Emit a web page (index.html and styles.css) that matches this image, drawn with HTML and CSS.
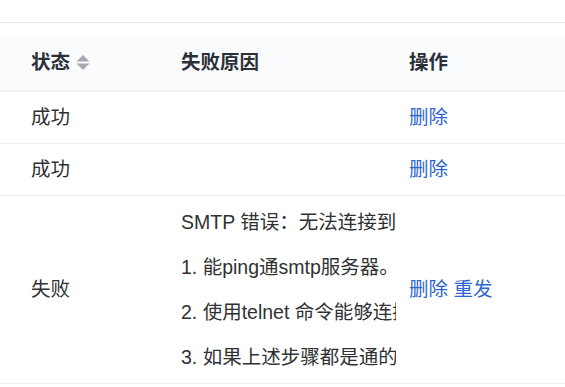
FILE: index.html
```html
<!DOCTYPE html>
<html lang="zh-CN">
<head>
<meta charset="utf-8">
<title>邮件发送记录</title>
<link rel="stylesheet" href="styles.css">
</head>
<body>
<div class="page">
  <div class="table">
    <div class="row head">
      <div class="cell c1"><span>状态</span>
        <svg class="sort" width="14" height="15" viewBox="0 0 14 15" aria-hidden="true">
          <polygon points="7,0 13.5,6.5 0.5,6.5" fill="#a7aab2"/>
          <polygon points="0.5,8.5 13.5,8.5 7,15" fill="#a7aab2"/>
        </svg>
      </div>
      <div class="cell c2">失败原因</div>
      <div class="cell c3">操作</div>
    </div>
    <div class="row">
      <div class="cell c1">成功</div>
      <div class="cell c2"></div>
      <div class="cell c3"><span><a class="link">删除</a></span></div>
    </div>
    <div class="row">
      <div class="cell c1">成功</div>
      <div class="cell c2"></div>
      <div class="cell c3"><span><a class="link">删除</a></span></div>
    </div>
    <div class="row">
      <div class="cell c1">失败</div>
      <div class="cell c2">
        <div class="reason">
          <p>SMTP 错误：无法连接到服务器</p>
          <p>1. 能ping通smtp服务器。</p>
          <p>2. 使用telnet 命令能够连接到服务器</p>
          <p>3. 如果上述步骤都是通的，请检查配置</p>
        </div>
      </div>
      <div class="cell c3"><span><a class="link">删除</a> <a class="link">重发</a></span></div>
    </div>
  </div>
</div>
</body>
</html>
```
FILE: styles.css
```css
* { box-sizing: border-box; }
html, body { margin: 0; padding: 0; background: #fff; }
body {
  font-family: "Liberation Sans", "Noto Sans CJK SC", sans-serif;
  font-size: 19.5px;
  color: #303133;
  overflow: hidden;
}
.page {
  padding-top: 22px;
}
.table {
  border-top: 1px solid #ebebeb;
  padding-top: 12px;
  width: 565px;
}
.row {
  display: grid;
  grid-template-columns: 169px 228px 1fr;
  border-bottom: 1px solid #eeeeee;
  align-items: center;
}
.row.head {
  background: #fafbfd;
  height: 57px;
  border-bottom: 2px solid #f0f1f3;
  font-weight: bold;
  color: #2b2f38;
}
.cell {
  padding: 12px 0 12px 12px;
  line-height: 27px;
  white-space: nowrap;
  display: flex;
  align-items: center;
}
.head .cell { padding-top: 0; padding-bottom: 0; }
.cell.c1 { padding-left: 31px; }
.sort { margin-left: 6px; }
.reason {
  width: 215px;
  overflow: hidden;
  display: flex;
  flex-direction: column;
  gap: 17px;
}
.reason p {
  margin: 0;
  line-height: 28px;
  white-space: nowrap;
}
.link {
  color: #2c66d4;
  text-decoration: none;
}
```
